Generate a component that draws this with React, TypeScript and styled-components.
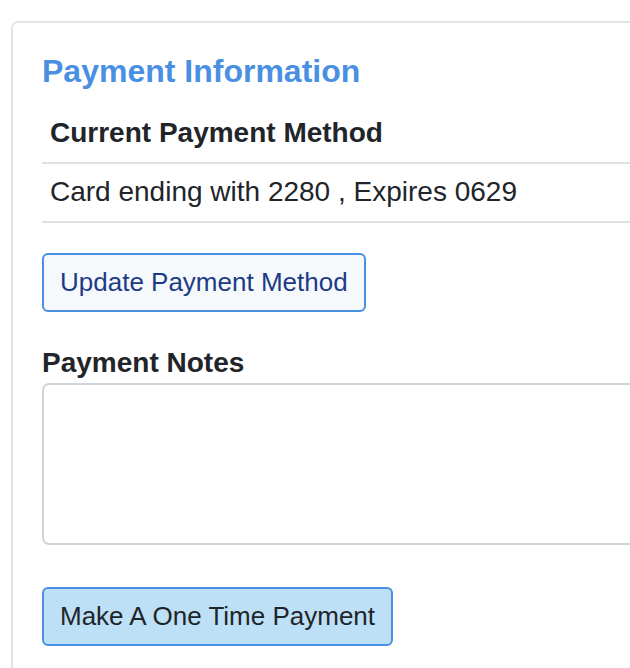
import React from "react";
import styled, { createGlobalStyle } from "styled-components";

const GlobalStyle = createGlobalStyle`
  html, body {
    margin: 0;
    padding: 0;
    background: #ffffff;
    overflow: hidden;
  }
  body {
    font-family: "Liberation Sans", Arial, Helvetica, sans-serif;
    color: #212529;
  }
  * { box-sizing: border-box; }
`;

const Page = styled.div`
  padding: 21px 0 0 11px;
  width: 630px;
  height: 668px;
  overflow: hidden;
`;

const Card = styled.section`
  width: 740px;
  min-height: 700px;
  border: 2px solid #e1e4e8;
  border-radius: 7px;
  padding: 30px 29px 30px 29px;
  display: flex;
  flex-direction: column;
  align-items: flex-start;
`;

const Title = styled.h2`
  margin: 0 0 16px 0;
  font-size: 32px;
  line-height: 36px;
  font-weight: 700;
  color: #4a90e2;
`;

const Table = styled.table`
  width: 100%;
  border-collapse: collapse;
  margin: 0 0 30px 0;
`;

const Cell = styled.td<{ $head?: boolean }>`
  padding: 12px 8px 13px 8px;
  font-size: 28px;
  line-height: 32px;
  font-weight: ${(p) => (p.$head ? 700 : 400)};
  text-align: left;
  border-bottom: 2px solid #dee2e6;
  color: #212529;
`;

const Button = styled.button<{ $variant: "light" | "primary" }>`
  font-family: "Liberation Sans", Arial, Helvetica, sans-serif;
  font-size: 26px;
  line-height: 30px;
  padding: 12px 16px 13px 16px;
  border: 2px solid #4a90e2;
  border-radius: 6px;
  cursor: pointer;
  background: ${(p) => (p.$variant === "light" ? "#f6f9fc" : "#bde0f6")};
  color: ${(p) => (p.$variant === "light" ? "#1d3b85" : "#212529")};
`;

const Label = styled.label`
  display: block;
  margin: 35px 0 4px 0;
  font-size: 28px;
  line-height: 32px;
  font-weight: 700;
  color: #212529;
`;

const NotesArea = styled.textarea`
  display: block;
  width: 100%;
  height: 162px;
  border: 2px solid #d1d5da;
  border-radius: 7px;
  resize: none;
  margin: 0 0 42px 0;
  font-family: "Liberation Sans", Arial, sans-serif;
  font-size: 26px;
  background: #ffffff;
`;

export default function App() {
  return (
    <Page>
      <GlobalStyle />
      <Card>
        <Title>Payment Information</Title>
        <Table>
          <tbody>
            <tr>
              <Cell as="th" $head>
                Current Payment Method
              </Cell>
            </tr>
            <tr>
              <Cell>Card ending with 2280 , Expires 0629</Cell>
            </tr>
          </tbody>
        </Table>
        <Button $variant="light">Update Payment Method</Button>
        <Label htmlFor="notes">Payment Notes</Label>
        <NotesArea id="notes" />
        <Button $variant="primary">Make A One Time Payment</Button>
      </Card>
    </Page>
  );
}
